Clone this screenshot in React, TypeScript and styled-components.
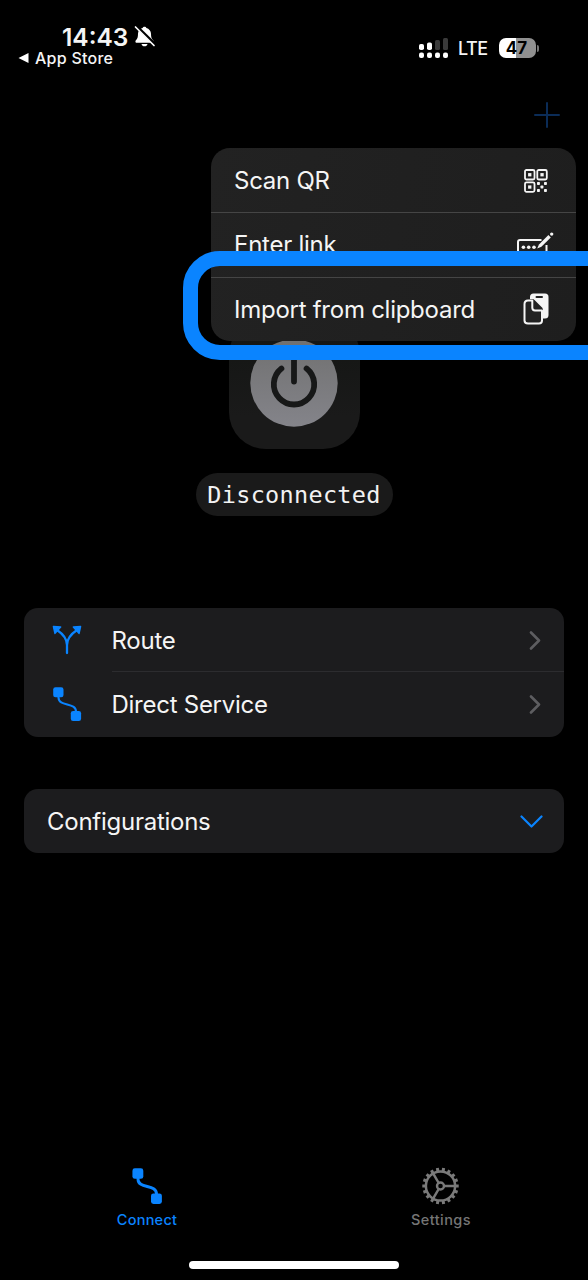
import React from "react";
import styled, { createGlobalStyle } from "styled-components";

const BLUE = "#0a84ff";

const GlobalStyle = createGlobalStyle`
  * { box-sizing: border-box; }
  body { margin: 0; background: #000; }
`;

const Screen = styled.div`
  position: relative;
  display: flex;
  flex-direction: column;
  width: 588px;
  height: 1280px;
  overflow: hidden;
  background: #000;
  color: #f5f5f5;
  font-family: Inter, "Liberation Sans", sans-serif;
  svg { display: block; flex: none; }
`;

const StatusBar = styled.header`
  display: flex;
  justify-content: space-between;
  height: 92px;
  padding: 23px 49px 0 18px;
`;

const StatusLeft = styled.div`
  display: flex;
  flex-direction: column;
`;

const ClockRow = styled.div`
  display: flex;
  align-items: center;
  gap: 5px;
  height: 27px;
  padding-left: 44px;
`;

const Clock = styled.span`
  width: 67px;
  font-size: 24.5px;
  font-weight: 600;
  line-height: 24px;
  white-space: nowrap;
`;

const BackLink = styled.div`
  display: flex;
  align-items: center;
  gap: 6px;
  height: 16px;
  font-size: 16px;
  font-weight: 500;
  line-height: 16px;
  letter-spacing: 0.25px;
`;

const StatusRight = styled.div`
  display: flex;
  align-items: center;
  height: 50px;
`;

const Carrier = styled.span`
  width: 30px;
  margin: 0 11px 0 10px;
  font-size: 18px;
  font-weight: 500;
  letter-spacing: -0.5px;
`;

const Battery = styled.div`
  display: flex;
  align-items: center;
  justify-content: center;
  width: 37px;
  height: 20px;
  padding-right: 2px;
  border-radius: 7px;
  background: linear-gradient(90deg, #fff 47%, #909090 47%);
  color: #000;
  font-size: 17px;
  font-weight: 700;
  line-height: 20px;
`;

const BatteryTip = styled.span`
  width: 2px;
  height: 7px;
  margin-left: 1px;
  border-radius: 0 2px 2px 0;
  background: #777;
`;

const NavBar = styled.nav`
  display: flex;
  justify-content: flex-end;
  height: 226px;
  padding: 10px 28px 0 0;
`;

const Hero = styled.section`
  display: flex;
  flex-direction: column;
  align-items: center;
  gap: 24px;
  height: 290px;
`;

const PowerTile = styled.div`
  display: flex;
  align-items: center;
  justify-content: center;
  width: 131px;
  height: 131px;
  padding-bottom: 2px;
  border-radius: 37px;
  background: linear-gradient(#131513, #1a1a1a 75%);
`;

const StatusPill = styled.div`
  display: flex;
  align-items: center;
  justify-content: center;
  width: 197px;
  height: 43px;
  padding-top: 2px;
  border-radius: 22px;
  background: #1a1a1a;
  color: #f2f2f2;
  font-family: "DejaVu Sans Mono", "Liberation Mono", monospace;
  font-size: 23.5px;
  line-height: 41px;
  letter-spacing: 0.3px;
`;

const Card = styled.section`
  flex: none;
  margin: 0 24px 52px;
  border-radius: 14px;
  background: #1c1c1e;
`;

const CardRow = styled.div`
  display: flex;
  height: 64.3px;
`;

const RowIcon = styled.div`
  display: flex;
  align-items: center;
  justify-content: center;
  width: 87.5px;
  padding-right: 1px;
`;

const RowBody = styled.div<{ $line?: boolean; $inset?: number; $end?: number }>`
  display: flex;
  flex: 1;
  align-items: center;
  justify-content: space-between;
  padding: 2px ${(p) => p.$end ?? 22}px 0 ${(p) => p.$inset ?? 0}px;
  border-bottom: 1.5px solid ${(p) => (p.$line ? "#2c2c2f" : "transparent")};
`;

const Label = styled.span`
  padding-top: 1px;
  font-size: 24px;
  line-height: 30px;
  letter-spacing: -0.26px;
  white-space: nowrap;
`;

const TabBar = styled.nav`
  display: flex;
  height: 90px;
  margin-top: auto;
`;

const Tab = styled.div<{ $active?: boolean }>`
  display: flex;
  flex: 1;
  flex-direction: column;
  align-items: center;
  gap: 5px;
  padding-top: 0.6px;
  color: ${(p) => (p.$active ? BLUE : "#757575")};
  font-size: 14.5px;
  font-weight: 500;
  line-height: 20px;
  letter-spacing: ${(p) => (p.$active ? 0.25 : 0.45)}px;
`;

const HomeIndicator = styled.div`
  flex: none;
  width: 210px;
  height: 8px;
  margin: 5px auto 11px;
  border-radius: 4px;
  background: #fff;
`;

const Menu = styled.div`
  position: absolute;
  top: 148px;
  left: 211px;
  display: flex;
  flex-direction: column;
  width: 365px;
  height: 193px;
  border-radius: 19px;
  background: linear-gradient(100deg, #222222, #1e1e1e);
  overflow: hidden;
`;

const MenuItem = styled.div<{ $end: number }>`
  display: flex;
  flex: 1;
  align-items: center;
  justify-content: space-between;
  padding: 1px ${(p) => p.$end}px 0 23px;
  & + & { padding-top: 0; border-top: 1px solid #454545; }
`;

const Highlight = styled.div`
  position: absolute;
  top: 251px;
  left: 183px;
  width: 460px;
  height: 109px;
  border: 15px solid ${BLUE};
  border-radius: 37px;
`;

const BellOff = () => (
  <svg width="22" height="24" viewBox="0 0 22 24">
    <path d="M10.5 1.8c.9 0 1.6.5 1.9 1.3 2.7.8 4.600 3 4.600 5.700 0 3.600.6 4.900 1.900 6.100.5.500.7.900.7 1.500 0 .8-.5 1.300-1.400 1.300H2.800c-.9 0-1.400-.5-1.400-1.300 0-.6.2-1 .7-1.500 1.300-1.200 1.900-2.500 1.900-6.100 0-2.700 1.900-4.900 4.600-5.700.3-.8 1-1.300 1.900-1.300Z" fill="#fff" />
    <path d="M7.500 18.900h6c-.3 1.500-1.500 2.300-3 2.300s-2.700-.8-3-2.300Z" fill="#fff" />
    <path d="M2.300 1.200 21.300 19.700" stroke="#000" strokeWidth="3.200" />
    <path d="M1.500 2 20 20.500" stroke="#fff" strokeWidth="1.700" strokeLinecap="round" />
  </svg>
);

const Signal = () => (
  <svg width="29" height="21" viewBox="0 0 29 21">
    <g fill="#fff">
      <rect x="0" y="6" width="5" height="6" rx="1.800" />
      <rect x="8" y="4.500" width="5" height="7.500" rx="1.800" />
      {[0, 8, 16, 24].map((x) => (
        <rect key={x} x={x} y="14.500" width="5" height="5.500" rx="2" />
      ))}
    </g>
    <g fill="#3a3a3a">
      <rect x="16" y="2" width="5" height="10" rx="1.500" />
      <rect x="24" y="0" width="5" height="12" rx="1.500" />
    </g>
  </svg>
);

const Plus = () => (
  <svg width="26" height="26" viewBox="0 0 26 26" stroke="#0b2c57" strokeWidth="2" strokeLinecap="round">
    <path d="M13 1v24M1 13h24" />
  </svg>
);

const Power = () => (
  <svg width="88" height="88" viewBox="0 0 88 88" fill="none">
    <defs>
      <linearGradient id="disc" x1="0" y1="0" x2="0" y2="1">
        <stop offset="0" stopColor="#707070" />
        <stop offset="1" stopColor="#84848a" />
      </linearGradient>
    </defs>
    <circle cx="44" cy="44" r="43.700" fill="url(#disc)" />
    <path d="M31.400 29.500A20.200 20.200 0 1 0 56.600 29.500M44 19v23.500" stroke="#171818" strokeWidth="5.800" strokeLinecap="round" />
  </svg>
);

const Branch = () => (
  <svg width="30" height="30" viewBox="0 0 30 30">
    <path d="M5 5c6 4 10 8 10 15M25 5c-6 4-10 8-10 15v8" fill="none" stroke={BLUE} strokeWidth="2.300" strokeLinecap="round" />
    <path d="M1.500 1.600 8.600 2 3 8.300ZM28.500 1.600 21.400 2 27 8.300Z" fill={BLUE} stroke={BLUE} strokeWidth="1.600" strokeLinejoin="round" />
  </svg>
);

const Link = ({ width = 30, height = 36, stroke = 2.1 }: { width?: number; height?: number; stroke?: number }) => (
  <svg width={width} height={height} viewBox="0 0 30 36">
    <rect x="1.200" y="1.200" width="10.300" height="10" rx="2.300" fill={BLUE} />
    <rect x="18.800" y="25" width="10.300" height="10" rx="2.300" fill={BLUE} />
    <path d="M6.500 10v1.500c0 9.500 17.500 4.500 17.500 14" fill="none" stroke={BLUE} strokeWidth={stroke} />
  </svg>
);

const ChevronRight = () => (
  <svg width="14" height="20" viewBox="0 0 14 20" fill="none" stroke="#5d5d60" strokeWidth="2.600" strokeLinecap="round" strokeLinejoin="round">
    <path d="m3 1.500 8 8-8 8" />
  </svg>
);

const ChevronDown = () => (
  <svg width="24" height="14" viewBox="0 0 24 14" fill="none" stroke={BLUE} strokeWidth="2.200" strokeLinecap="round" strokeLinejoin="round">
    <path d="m2.500 2.500 10 10 10-10" />
  </svg>
);

const QrCode = () => (
  <svg width="24" height="24" viewBox="0 0 24 24">
    {[[1, 1], [13.3, 1], [1, 13.3]].map(([x, y]) => (
      <g key={`${x}-${y}`}>
        <rect x={x} y={y} width="9.500" height="9.500" rx="1.500" fill="none" stroke="#f5f5f5" strokeWidth="1.800" />
        <rect x={x + 3.1} y={y + 3.1} width="3.300" height="3.300" fill="#f5f5f5" />
      </g>
    ))}
    {[[13, 13], [20, 13], [16.5, 16.5], [13, 20], [20, 20]].map(([x, y]) => (
      <rect key={`${x}-${y}`} x={x} y={y} width="2.900" height="2.900" rx=".7" fill="#f5f5f5" />
    ))}
  </svg>
);

const EnterText = () => (
  <svg width="38" height="28" viewBox="0 0 38 28" fill="none">
    <path d="M25.500 9H4Q2 9 2 11v12q0 2 2 2h24.500q2 0 2-2v-9" stroke="#f5f5f5" strokeWidth="2" />
    <g fill="#f5f5f5">
      <circle cx="7.400" cy="16.300" r="1.800" />
      <circle cx="12.700" cy="16.300" r="1.800" />
      <circle cx="18" cy="16.300" r="1.800" />
      <path d="m21.200 17.600 1.800-4.200L32.400 4l2.400 2.400-9.400 9.400Z" />
      <circle cx="35.700" cy="3.100" r="1.700" />
    </g>
  </svg>
);

const Clipboard = () => (
  <svg width="26" height="32" viewBox="0 0 26 32">
    <rect x="7" y=".5" width="18.500" height="25" rx="3.500" fill="#f5f5f5" />
    <rect x="12.500" y="3" width="7.500" height="2" rx="1" fill="#222" />
    <path d="M1 10Q2 6 5 6h4.500q1 0 2 1l7.500 7.500q1 1 1 2.500v8.500H5Z" fill="#222" />
    <path d="M9.300 7.500v7.300q0 2.700 2.700 2.700h7V27.500q0 3-3 3H5q-3.500 0-3.500-3V11q0-3.500 3.500-3.500Z" fill="#222" stroke="#f5f5f5" strokeWidth="2" strokeLinejoin="round" />
  </svg>
);

const Gear = () => (
  <svg width="38" height="38" viewBox="0 0 38 38" fill="none" stroke="#7a7a7a">
    <circle cx="18.500" cy="19" r="14.600" strokeWidth="2.500" />
    {Array.from({ length: 18 }, (_, i) => (
      <path key={i} d="M18.500 .8v3.800" strokeWidth="3" transform={`rotate(${i * 20 + 10} 18.500 19)`} />
    ))}
    <circle cx="18.500" cy="19" r="3.500" strokeWidth="2.400" />
    <path d="M22 19h11M16.700 16 11.100 6.300M16.700 22l-5.600 9.700" strokeWidth="2.500" />
  </svg>
);

export default function App() {
  return (
    <Screen>
      <GlobalStyle />
      <StatusBar>
        <StatusLeft>
          <ClockRow>
            <Clock>14:43</Clock>
            <BellOff />
          </ClockRow>
          <BackLink>
            <svg width="11" height="10" viewBox="0 0 11 10">
              <path d="M.5 5 10.500 0v10Z" fill="#fff" />
            </svg>
            App Store
          </BackLink>
        </StatusLeft>
        <StatusRight>
          <Signal />
          <Carrier>LTE</Carrier>
          <Battery>47</Battery>
          <BatteryTip />
        </StatusRight>
      </StatusBar>

      <NavBar>
        <Plus />
      </NavBar>

      <Hero>
        <PowerTile>
          <Power />
        </PowerTile>
        <StatusPill>Disconnected</StatusPill>
      </Hero>

      <Card>
        <CardRow>
          <RowIcon>
            <Branch />
          </RowIcon>
          <RowBody $line>
            <Label>Route</Label>
            <ChevronRight />
          </RowBody>
        </CardRow>
        <CardRow>
          <RowIcon>
            <Link />
          </RowIcon>
          <RowBody>
            <Label>Direct Service</Label>
            <ChevronRight />
          </RowBody>
        </CardRow>
      </Card>

      <Card>
        <CardRow>
          <RowBody $inset={23} $end={21}>
            <Label>Configurations</Label>
            <ChevronDown />
          </RowBody>
        </CardRow>
      </Card>

      <TabBar>
        <Tab $active>
          <Link width={32} height={38} stroke={2.8} />
          Connect
        </Tab>
        <Tab>
          <Gear />
          Settings
        </Tab>
      </TabBar>
      <HomeIndicator />

      <Menu>
        <MenuItem $end={28.5}>
          <Label>Scan QR</Label>
          <QrCode />
        </MenuItem>
        <MenuItem $end={22}>
          <Label>Enter link</Label>
          <EnterText />
        </MenuItem>
        <MenuItem $end={27.5}>
          <Label>Import from clipboard</Label>
          <Clipboard />
        </MenuItem>
      </Menu>
      <Highlight />
    </Screen>
  );
}
